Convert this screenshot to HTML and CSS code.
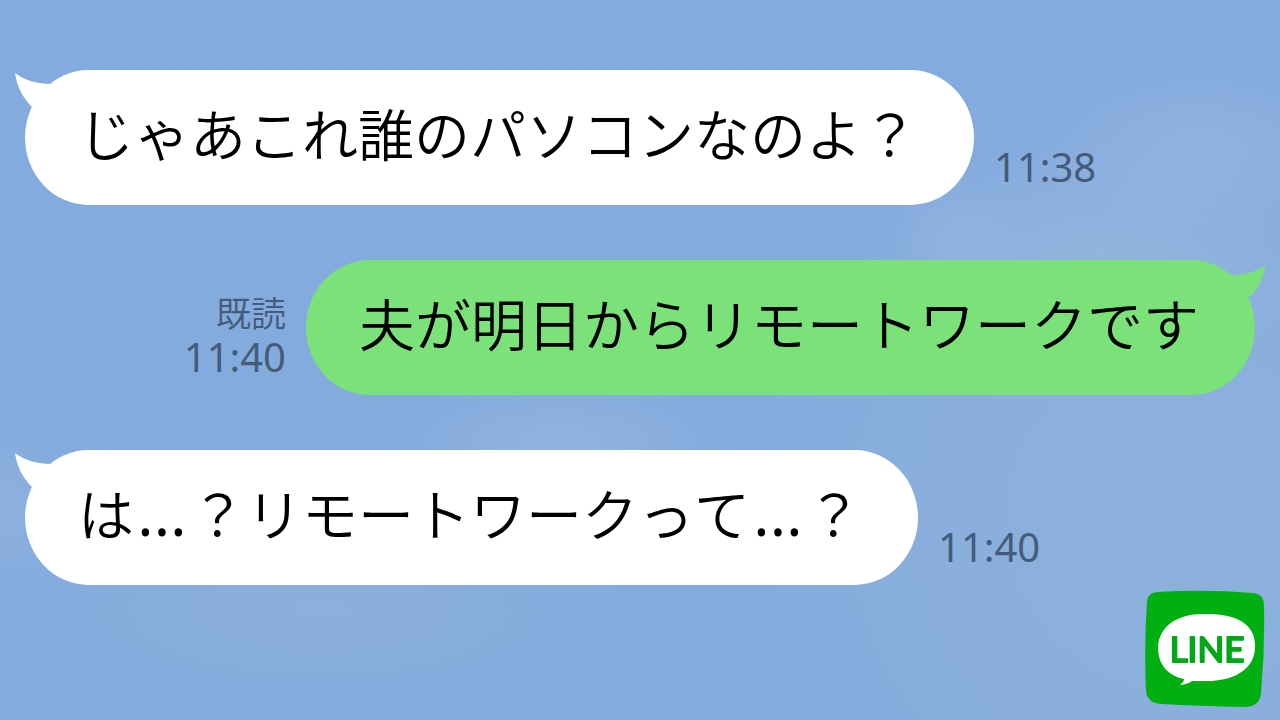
FILE: index.html
```html
<!DOCTYPE html>
<html lang="ja">
<head>
<meta charset="utf-8">
<meta name="viewport" content="width=device-width, initial-scale=1">
<title>トーク</title>
<link rel="stylesheet" href="styles.css">
</head>
<body>
<main class="chat">
  <article class="message">
    <p class="bubble">
      <svg class="tail" viewBox="0 0 44 36" aria-hidden="true"><path d="M0 0C9 7 22 11 36 11L44 20L17 34C8 25 2 14 0 0Z"/></svg>
      じゃあこれ誰のパソコンなのよ？
    </p>
    <div class="meta"><time>11:38</time></div>
  </article>
  <article class="message message-own">
    <p class="bubble">
      <svg class="tail" viewBox="0 0 44 36" aria-hidden="true"><path d="M0 0C9 7 22 11 36 10L44 20L15 32C7 24 1 13 0 0Z"/></svg>
      夫が明日からリモートワークです
    </p>
    <div class="meta"><span class="read">既読</span><time>11:40</time></div>
  </article>
  <article class="message">
    <p class="bubble">
      <svg class="tail" viewBox="0 0 44 36" aria-hidden="true"><path d="M0 0C9 7 22 11 36 11L44 20L17 34C8 25 2 14 0 0Z"/></svg>
      は<span class="dots">…</span>？リモートワークって<span class="dots">…</span>？
    </p>
    <div class="meta"><time>11:40</time></div>
  </article>
</main>
<svg class="logo" viewBox="0 0 120 118" role="img" aria-label="LINE">
  <path fill="#00b012" d="M12 2Q60-1 108 3Q119 4 119 16Q120 60 116 103Q115 117 99 117Q55 116 16 114Q2 113 1 101Q-1 55 2 12Q2 3 12 2Z"/>
  <path fill="#fff" d="M60 24C85 23 110 31 110 55C111 81 86 92 58 91L47 91Q43 94 35 95Q39 92 39 89C21 85 13 73 13 57C14 35 35 23 60 24Z"/>
  <text class="logo-text" x="62" y="72" text-anchor="middle">LINE</text>
</svg>
</body>
</html>
```
FILE: styles.css
```css
* {
  box-sizing: border-box;
}

body {
  margin: 0;
  min-height: 100vh;
  font-family: "Noto Sans CJK JP", sans-serif;
  color: #000;
  background:
    radial-gradient(ellipse 170px 90px at 1200px 150px, rgba(150, 182, 223, 0.7), transparent),
    radial-gradient(ellipse 70px 60px at 960px 240px, rgba(150, 182, 223, 0.6), transparent),
    radial-gradient(ellipse 240px 120px at 1100px 260px, rgba(150, 182, 223, 0.7), transparent),
    radial-gradient(ellipse 180px 60px at 560px 440px, rgba(148, 181, 222, 0.8), transparent),
    radial-gradient(ellipse 330px 110px at 320px 610px, rgba(143, 178, 217, 0.7), transparent),
    radial-gradient(ellipse 60px 90px at 10px 510px, rgba(148, 181, 222, 0.6), transparent),
    radial-gradient(ellipse 430px 420px at 1180px 520px, rgba(142, 178, 220, 0.9), rgba(141, 177, 219, 0.6) 60%, rgba(141, 177, 219, 0)),
    #84abde;
}

.chat {
  display: flex;
  flex-direction: column;
  gap: 55px;
  padding: 70px 25px;
}

.message {
  display: flex;
  align-items: flex-end;
  gap: 20px;
}

.message-own {
  flex-direction: row-reverse;
}

.bubble {
  position: relative;
  margin: 0;
  padding: 22px 56px 33px 53px;
  border-radius: 64px / 68px;
  background: #fff;
  font-size: 56px;
  font-weight: 350;
  font-kerning: none;
  line-height: 80px;
  white-space: nowrap;
}

.message-own .bubble {
  background: #7be279;
}

.tail {
  position: absolute;
  top: 3px;
  left: -10px;
  width: 44px;
  height: 36px;
  fill: #fff;
}

.message-own .tail {
  top: 5px;
  right: -10px;
  left: auto;
  fill: #7be279;
  transform: scaleX(-1);
}

.dots {
  display: inline-block;
  width: 56px;
  font-family: "Open Sans", sans-serif;
  font-size: 64px;
  font-weight: 400;
  line-height: 56px;
  text-align: center;
}

.meta {
  display: flex;
  flex-direction: column;
  align-items: flex-end;
  padding-bottom: 16px;
  color: #455b7a;
  font-size: 35px;
  font-weight: 350;
  line-height: 45px;
}

.meta time {
  font-family: "Noto Sans", sans-serif;
  font-size: 40px;
  font-weight: 400;
}

.logo {
  position: fixed;
  right: 15px;
  bottom: 12px;
  width: 120px;
  height: 118px;
}

.logo-text {
  fill: #00a815;
  stroke: #00a815;
  stroke-width: 2;
  stroke-linejoin: round;
  font-family: Lato, sans-serif;
  font-size: 35px;
  font-weight: 400;
}
```
